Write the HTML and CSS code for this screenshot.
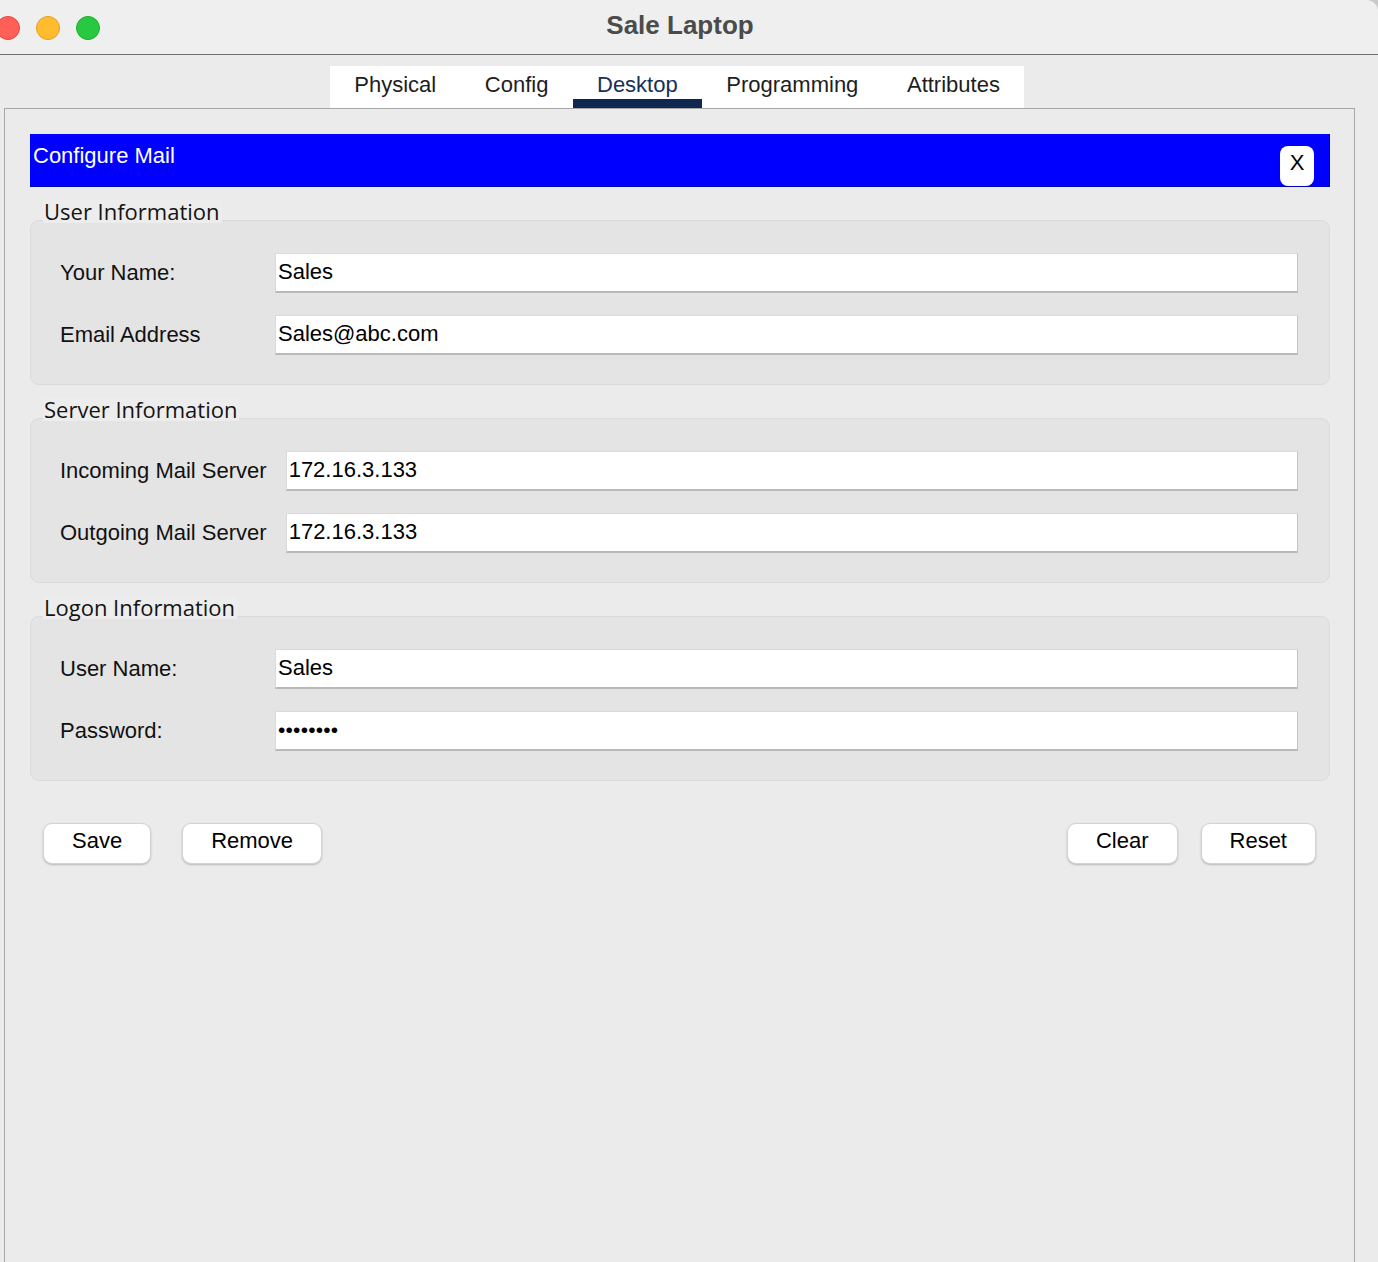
FILE: index.html
```html
<!DOCTYPE html>
<html>
<head>
<meta charset="utf-8">
<title>Sale Laptop</title>
<link rel="stylesheet" href="styles.css">
</head>
<body>
<div class="window">
  <header class="titlebar">
    <div class="lights">
      <span class="light red"></span>
      <span class="light yellow"></span>
      <span class="light green"></span>
    </div>
    <div class="title">Sale Laptop</div>
  </header>

  <nav class="tabs">
    <div class="tab">Physical</div>
    <div class="tab">Config</div>
    <div class="tab active">Desktop</div>
    <div class="tab">Programming</div>
    <div class="tab">Attributes</div>
  </nav>

  <main class="panel">
    <div class="mailbar">
      <span class="mailbar-title">Configure Mail</span>
      <button class="close">X</button>
    </div>

    <section class="group">
      <div class="legend">User Information</div>
      <div class="box">
        <div class="row"><span class="label">Your Name:</span><div class="field">Sales</div></div>
        <div class="row"><span class="label">Email Address</span><div class="field">Sales@abc.com</div></div>
      </div>
    </section>

    <section class="group">
      <div class="legend">Server Information</div>
      <div class="box">
        <div class="row"><span class="label">Incoming Mail Server</span><div class="field">172.16.3.133</div></div>
        <div class="row"><span class="label">Outgoing Mail Server</span><div class="field">172.16.3.133</div></div>
      </div>
    </section>

    <section class="group">
      <div class="legend">Logon Information</div>
      <div class="box">
        <div class="row"><span class="label">User Name:</span><div class="field">Sales</div></div>
        <div class="row"><span class="label">Password:</span><div class="field password">••••••••</div></div>
      </div>
    </section>

    <div class="actions">
      <div class="btn-group">
        <button class="btn">Save</button>
        <button class="btn">Remove</button>
      </div>
      <div class="btn-group right">
        <button class="btn">Clear</button>
        <button class="btn">Reset</button>
      </div>
    </div>
  </main>
</div>
</body>
</html>
```

FILE: styles.css
```css
html {
  background: #c9c9c9;
}
body {
  margin: 0;
  height: 1262px;
  overflow: hidden;
  font-family: "Liberation Sans", Arial, sans-serif;
  color: #000;
}
.window {
  background: #ebebeb;
  height: 1262px;
  border-top-right-radius: 12px;
  overflow: hidden;
}

/* title bar */
.titlebar {
  display: grid;
  height: 54px;
  background: #efefef;
  border-bottom: 1px solid #6f6f6f;
}
.lights, .title {
  grid-area: 1 / 1;
}
.lights {
  display: flex;
  align-items: center;
  gap: 16px;
  margin-left: -4px;
  padding-top: 2px;
}
.light {
  width: 24px;
  height: 24px;
  border-radius: 50%;
  box-sizing: border-box;
}
.red { background: #fe5f57; border: 1px solid #e2463f; }
.yellow { background: #febc2e; border: 1px solid #dea123; }
.green { background: #28c840; border: 1px solid #1dad2b; }
.title {
  align-self: center;
  text-align: center;
  padding: 0 18px 4px 0;
  font-weight: bold;
  font-size: 26px;
  color: #4b4b4b;
}

/* tabs */
.tabs {
  display: flex;
  width: fit-content;
  margin: 11px 0 0 330px;
  height: 42px;
  background: #fff;
}
.tab {
  position: relative;
  padding: 6px 24.3px 0;
  font-size: 22px;
  line-height: 26px;
  color: #1d1d1d;
}
.tab.active {
  color: #16305c;
}
.tab.active::after {
  content: "";
  position: absolute;
  left: 0;
  right: 0;
  bottom: 0;
  height: 9px;
  background: #10284f;
}

/* panel */
.panel {
  margin-left: 4px;
  width: 1351px;
  box-sizing: border-box;
  height: 1300px;
  border: 1px solid #a7a7a7;
  padding: 25px 24px 0 25px;
}

.mailbar {
  display: flex;
  justify-content: space-between;
  align-items: flex-start;
  height: 53px;
  box-sizing: border-box;
  background: #0000ff;
  border-bottom: 1px solid #0000b4;
  border-right: 1px solid #0000b4;
  padding: 0 15px 0 3px;
}
.mailbar-title {
  color: #fff;
  font-size: 22px;
  line-height: 22px;
  padding-top: 11px;
}
.close {
  margin-top: 12px;
  width: 34px;
  height: 40px;
  border: none;
  border-radius: 8px;
  background: #fff;
  font-family: "Liberation Sans", Arial, sans-serif;
  font-size: 22px;
  color: #000;
  padding: 0 0 6px;
}

/* groups */
.group {
  margin-top: 13px;
}
.legend {
  position: relative;
  z-index: 1;
  display: block;
  width: fit-content;
  margin-left: 13px;
  margin-bottom: -3px;
  padding: 0 2px 0 1px;
  height: 23px;
  background: #ededed;
  font-family: "Open Sans", sans-serif;
  font-size: 22px;
  line-height: 22px;
  color: #141414;
}
.box {
  background: #e4e4e4;
  border: 1px solid #dadada;
  border-radius: 9px;
  padding: 32px 31px 29px 29px;
  display: flex;
  flex-direction: column;
  gap: 22px;
}
.row {
  display: flex;
  align-items: center;
  height: 40px;
}
.label {
  min-width: 215px;
  box-sizing: border-box;
  padding-right: 19px;
  font-size: 22px;
  color: #111;
}
.field {
  flex: 1;
  height: 40px;
  box-sizing: border-box;
  background: #fff;
  border-top: 1px solid #dadada;
  border-left: 1px solid #dadada;
  border-right: 1px solid #c4c4c4;
  border-bottom: 2px solid #b9b9b9;
  padding: 0 2px;
  font-size: 22px;
  line-height: 36px;
  color: #000;
}
.field.password {
  font-size: 21px;
  letter-spacing: 0.2px;
}

/* buttons */
.actions {
  display: flex;
  justify-content: space-between;
  margin-top: 42px;
  padding: 0 14px 0 13px;
}
.btn-group {
  display: flex;
  gap: 31px;
}
.btn-group.right {
  gap: 23px;
}
.btn {
  height: 41px;
  padding: 0 28px 5px;
  background: #fff;
  border: 1px solid #d3d3d3;
  border-radius: 9px;
  box-shadow: 0 1px 2px rgba(0, 0, 0, 0.22);
  font-family: "Liberation Sans", Arial, sans-serif;
  font-size: 22px;
  color: #000;
}
```
